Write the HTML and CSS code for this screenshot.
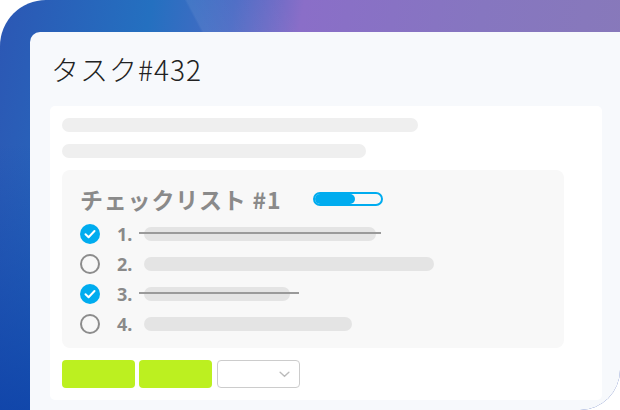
FILE: index.html
```html
<!DOCTYPE html>
<html lang="ja">
<head>
    <meta charset="UTF-8" />
    <meta name="viewport" content="width=device-width, initial-scale=1.0" />
    <title>タスク#432</title>
    <link rel="stylesheet" href="styles.css">
</head>
<body>
    <div class="stage">
        <div class="card">
            <h1 class="task-title">タスク#432</h1>
            <div class="sheet">
                <div class="skel" style="width: 356px"></div>
                <div class="skel" style="width: 304px"></div>
                <div class="checklist">
                    <div class="checklist-head">
                        <h2>チェックリスト #1</h2>
                        <div class="progress"><div class="progress-fill" style="width: 60%"></div></div>
                    </div>
                    <div class="item done">
                        <span class="tick"><svg viewBox="0 0 20 20" width="20" height="20"><circle cx="10" cy="10" r="10" fill="#00acef"/><path d="M5.5 10.2 L8.6 13.2 L14.5 7" fill="none" stroke="#fff" stroke-width="2" stroke-linecap="round" stroke-linejoin="round"/></svg></span>
                        <span class="num">1.</span>
                        <span class="line" style="width: 232px"></span>
                    </div>
                    <div class="item">
                        <span class="tick"><svg viewBox="0 0 20 20" width="20" height="20"><circle cx="10" cy="10" r="9" fill="none" stroke="#8c8c8c" stroke-width="2"/></svg></span>
                        <span class="num">2.</span>
                        <span class="line" style="width: 290px"></span>
                    </div>
                    <div class="item done long-strike">
                        <span class="tick"><svg viewBox="0 0 20 20" width="20" height="20"><circle cx="10" cy="10" r="10" fill="#00acef"/><path d="M5.5 10.2 L8.6 13.2 L14.5 7" fill="none" stroke="#fff" stroke-width="2" stroke-linecap="round" stroke-linejoin="round"/></svg></span>
                        <span class="num">3.</span>
                        <span class="line" style="width: 146px"></span>
                    </div>
                    <div class="item">
                        <span class="tick"><svg viewBox="0 0 20 20" width="20" height="20"><circle cx="10" cy="10" r="9" fill="none" stroke="#8c8c8c" stroke-width="2"/></svg></span>
                        <span class="num">4.</span>
                        <span class="line" style="width: 208px"></span>
                    </div>
                </div>
                <div class="actions">
                    <button class="btn-green"></button>
                    <button class="btn-green"></button>
                    <div class="select">
                        <svg viewBox="0 0 12 8" width="11" height="7"><path d="M1 1.5 L6 6 L11 1.5" fill="none" stroke="#bbbbbb" stroke-width="1.6" stroke-linecap="round"/></svg>
                    </div>
                </div>
            </div>
        </div>
    </div>
</body>
</html>
```

FILE: styles.css
```css
html, body {
    margin: 0;
    background: #ffffff;
}
body {
    width: 620px;
    height: 410px;
    overflow: hidden;
    font-family: "Noto Sans CJK JP", "Noto Sans", sans-serif;
}
.stage {
    width: 620px;
    height: 410px;
    box-sizing: border-box;
    padding: 32px 0 0 30px;
    border-radius: 46px 0 40px 0;
    background:
        linear-gradient(150deg, rgba(255,255,255,0) 0 62%, rgba(255,255,255,0.12) 62.2%, rgba(255,255,255,0.05) 64%, rgba(255,255,255,0) 70%),
        linear-gradient(62deg, rgba(255,255,255,0) 0 48%, rgba(255,255,255,0.07) 48.3%, rgba(255,255,255,0) 60%),
        linear-gradient(180deg, rgba(10,60,160,0) 0 35%, rgba(10,60,165,0.75) 100%),
        linear-gradient(100deg, #2c57b4 0%, #2470c0 22%, #4a6ac4 34%, #8a6ec8 44%, #8676c0 70%, #887ab8 100%);
}
.card {
    height: 100%;
    box-sizing: border-box;
    padding: 0 18px 11px 20px;
    background: #f7f9fc;
    border-radius: 10px 0 40px 0;
    display: flex;
    flex-direction: column;
}
.task-title {
    margin: 0;
    height: 74px;
    padding: 0 0 0 1px;
    font-size: 28px;
    font-weight: 300;
    line-height: 74px;
    letter-spacing: 1px;
    color: #222;
}
.sheet {
    flex: 1;
    background: #ffffff;
    border-radius: 5px;
    padding: 12px;
    display: flex;
    flex-direction: column;
    gap: 12px;
}
.skel {
    height: 14px;
    border-radius: 7px;
    background: #efefef;
}
.checklist {
    width: 502px;
    height: 178px;
    box-sizing: border-box;
    background: #f8f8f8;
    border-radius: 8px;
    padding: 15px 18px 9px 18px;
}
.checklist-head {
    display: flex;
    align-items: center;
    height: 28px;
    margin-bottom: 6px;
}
.checklist-head h2 {
    margin: 0;
    font-size: 23px;
    font-weight: 700;
    color: #8a8a8a;
    line-height: 28px;
    letter-spacing: 0.8px;
}
.progress {
    margin-left: 32px;
    width: 70px;
    height: 14px;
    box-sizing: border-box;
    border: 2px solid #00acef;
    border-radius: 7px;
    overflow: hidden;
}
.progress-fill {
    height: 100%;
    background: #00acef;
    border-radius: 0 5px 5px 0;
}
.item {
    height: 30px;
    display: flex;
    align-items: center;
}
.tick {
    width: 20px;
    height: 20px;
    display: flex;
    margin-right: 17px;
}
.num {
    width: 27px;
    font-family: "Noto Sans", sans-serif;
    font-size: 18px;
    font-weight: 700;
    color: #8a8a8a;
}
.line {
    position: relative;
    height: 14px;
    border-radius: 7px;
    background: #e4e4e4;
}
.done .line::after {
    content: "";
    position: absolute;
    left: -5px;
    right: -5px;
    top: 5px;
    height: 2px;
    background: #9a9a9a;
}
.long-strike .line::after {
    right: -9px;
}
.actions {
    display: flex;
    gap: 4px;
    height: 28px;
}
.btn-green {
    width: 73px;
    height: 28px;
    border: none;
    border-radius: 4px;
    background: #bcf020;
    padding: 0;
}
.select {
    width: 83px;
    height: 28px;
    margin-left: 1px;
    box-sizing: border-box;
    border: 1px solid #cccccc;
    border-radius: 4px;
    background: #fff;
    display: flex;
    align-items: center;
    justify-content: flex-end;
    padding-right: 9px;
}
```
